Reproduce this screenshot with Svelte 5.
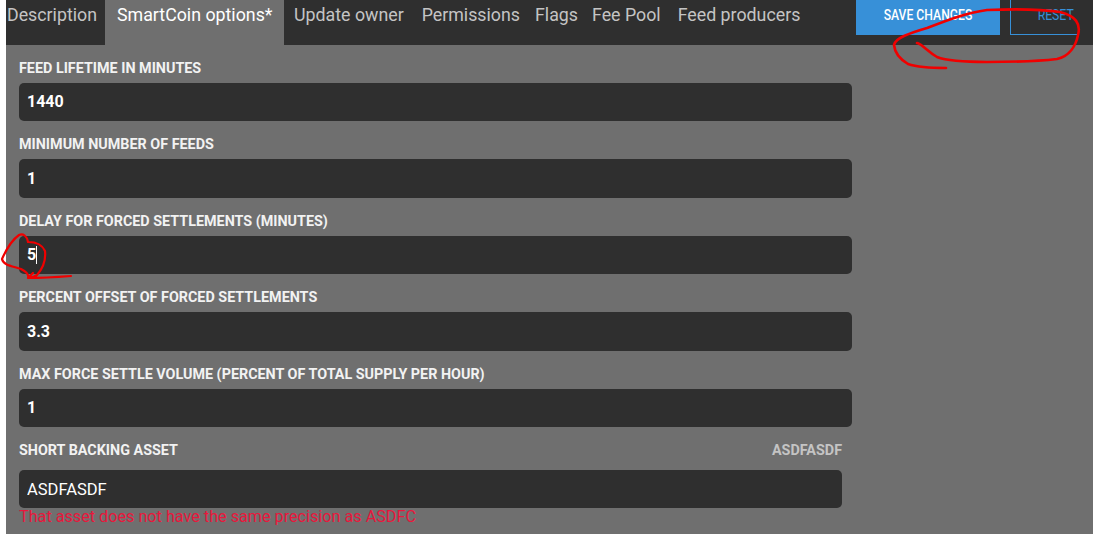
<script lang="ts">
  const tabs = [
    { name: 'Description', cls: 'first' },
    { name: 'SmartCoin options*', cls: 'active' },
    { name: 'Update owner', cls: 'owner' },
    { name: 'Permissions', cls: 'perms' },
    { name: 'Flags', cls: 'flags' },
    { name: 'Fee Pool', cls: 'pool' },
    { name: 'Feed producers', cls: 'producers' },
  ];

  const fields = [
    { label: 'Feed lifetime in minutes', value: '1440' },
    { label: 'Minimum number of feeds', value: '1' },
    { label: 'Delay for forced settlements (minutes)', value: '5', focused: true },
    { label: 'Percent offset of forced settlements', value: '3.3' },
    { label: 'Max force settle volume (percent of total supply per hour)', value: '1' },
  ];
</script>

<div class="page">
  <header class="topbar">
    <nav class="tabs">
      {#each tabs as tab (tab.name)}
        <span class="tab {tab.cls}">{tab.name}</span>
      {/each}
    </nav>
    <div class="actions">
      <button type="button" class="btn save"><span>Save changes</span></button>
      <button type="button" class="btn reset"><span>Reset</span></button>
    </div>
  </header>

  <main class="form">
    {#each fields as field (field.label)}
      <div class="field">
        <label class="label" for={field.label}>{field.label}</label>
        <div class="input-wrap">
          <input id={field.label} class="input" value={field.value} readonly />
          {#if field.focused}<span class="caret"></span>{/if}
        </div>
      </div>
    {/each}

    <div class="asset">
      <div class="asset-head">
        <label class="label" for="backing">Short backing asset</label>
        <span class="asset-name">ASDFASDF</span>
      </div>
      <input id="backing" class="input plain" value="ASDFASDF" readonly />
      <div class="error">That asset does not have the same precision as ASDFC</div>
    </div>
  </main>

  <!-- hand drawn markup on top of the screenshot -->
  <svg class="scribble" width="1093" height="534" viewBox="0 0 1093 534" fill="none">
    <path d="M917 43 C922 44 927 51 937 57 C950 62 975 62 987 62 C1010 62 1040 61 1057 59 C1070 56 1076 45 1078 35 C1081 24 1076 16 1060 12 C1040 9 1010 9 987 10 C965 13 945 21 927 28 C910 33 895 38 894 45 C895 55 903 61 908 64 C920 68 935 68 946 68" stroke="#f00000" stroke-width="2.6" stroke-linecap="round" stroke-linejoin="round" />
    <path d="M28 242 C27 236 23 233 19 235 C12 240 6 250 2 259 C3 265 12 266 21 269 C27 272 29 275 28 278 M28 242 C36 242 42 244 45 251 C46 260 43 268 37 275 C33 278 30 278 28 278 M33 273 L28 278 C42 278 58 277 71 276" stroke="#f00000" stroke-width="2.2" stroke-linecap="round" stroke-linejoin="round" />
  </svg>
</div>

<style>
  :global(body) {
    margin: 0;
    background: #fff;
  }

  .page {
    position: relative;
    width: 1093px;
    height: 534px;
    padding-left: 6px;
    box-sizing: border-box;
    overflow: hidden;
    font-family: Roboto, "Liberation Sans", sans-serif;
  }

  .topbar {
    display: flex;
    justify-content: space-between;
    height: 45px;
    background: #2f2f2f;
  }

  .tabs {
    display: flex;
    height: 100%;
  }

  .tab {
    padding: 4px 0 0;
    font-size: 17.8px;
    line-height: 22px;
    color: #c4c4c4;
  }

  .tab.first { padding-left: 1px; padding-right: 8px; }
  .tab.owner { padding-left: 10px; padding-right: 9px; }
  .tab.perms { padding-left: 9px; padding-right: 8px; }
  .tab.flags { padding-left: 7px; padding-right: 7px; }
  .tab.pool { padding-left: 7px; padding-right: 8px; }
  .tab.producers { padding-left: 9px; }

  .tab.active {
    padding-left: 12px;
    padding-right: 11.6px;
    background: #6f6f6f;
    color: #fff;
  }

  .actions {
    display: flex;
    gap: 10px;
    width: 237px;
    height: 35px;
  }

  .btn {
    padding: 0 0 5px;
    border: 0;
    font-family: inherit;
    font-size: 14px;
    font-weight: 500;
    text-transform: uppercase;
    cursor: pointer;
  }

  .btn span {
    display: inline-block;
    transform: scaleX(0.87);
  }

  .save {
    width: 144px;
    background: #3790d8;
    color: #fff;
  }

  .reset {
    width: 68px;
    padding-left: 24px;
    background: none;
    border-left: 1px solid #3790d8;
    border-bottom: 1px solid #3790d8;
    box-sizing: border-box;
    color: #3790d8;
    font-weight: 400;
    white-space: nowrap;
    text-align: left;
  }

  .form {
    width: 1087px;
    height: 489px;
    padding: 14.6px 0 0 13px;
    box-sizing: border-box;
    background: #6f6f6f;
  }

  .field {
    width: 833px;
    height: 76.5px;
  }

  .label {
    display: block;
    height: 23px;
    font-size: 14.35px;
    font-weight: 700;
    line-height: 17px;
    text-transform: uppercase;
    color: #f2f2f2;
  }

  .input-wrap {
    position: relative;
  }

  .input {
    display: block;
    width: 100%;
    height: 38.5px;
    padding: 0 8px;
    border: 0;
    border-radius: 5px;
    box-sizing: border-box;
    outline: none;
    background: #2f2f2f;
    font-family: inherit;
    font-size: 16px;
    font-weight: 700;
    color: #fff;
  }

  .caret {
    position: absolute;
    top: 10px;
    left: 17px;
    width: 1px;
    height: 18px;
    background: #fff;
  }

  .asset {
    width: 823px;
  }

  .asset-head {
    display: flex;
    justify-content: space-between;
    height: 27.7px;
  }

  .asset-head .label {
    height: auto;
  }

  .asset-name {
    font-size: 14.35px;
    font-weight: 700;
    line-height: 17px;
    color: #c4c4c4;
  }

  .input.plain {
    font-size: 16.5px;
    font-weight: 400;
  }

  .error {
    font-size: 16.2px;
    line-height: 17px;
    color: #e8173c;
  }

  .scribble {
    position: absolute;
    top: 0;
    left: 0;
    pointer-events: none;
  }
</style>
